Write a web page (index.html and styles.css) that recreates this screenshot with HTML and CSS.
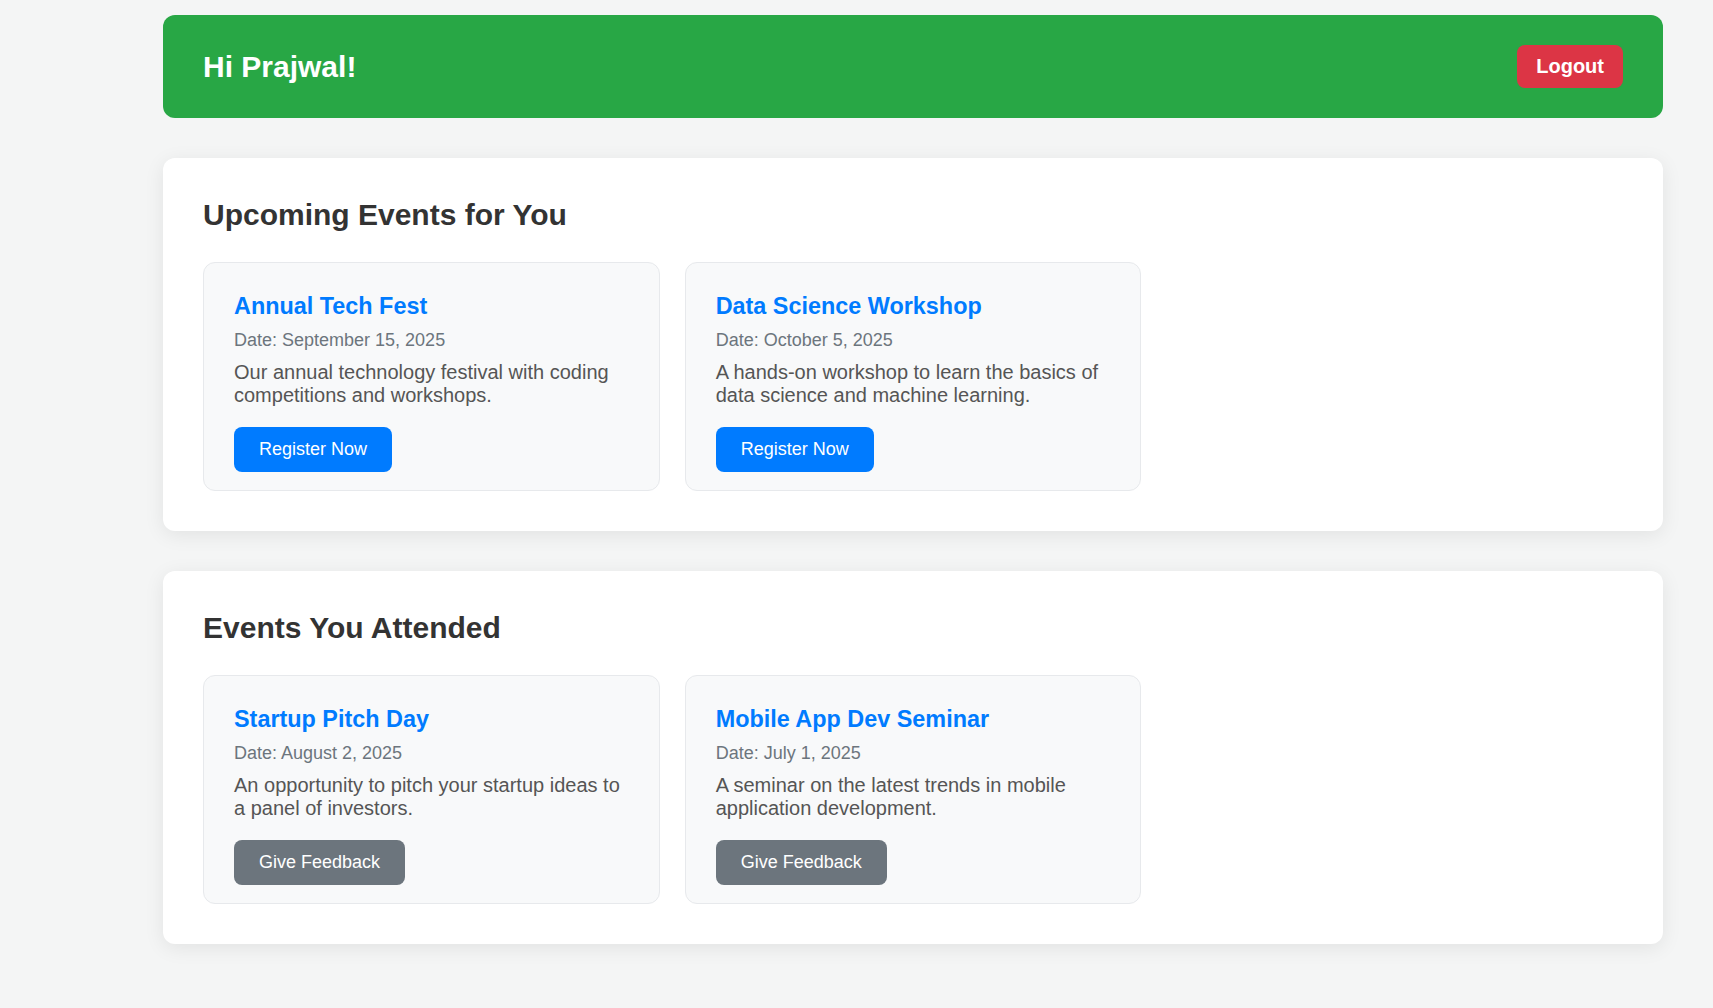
FILE: index.html
```html
<!DOCTYPE html>
<html lang="en">
<head>
<meta charset="utf-8">
<title>Dashboard</title>
<link rel="stylesheet" href="styles.css">
</head>
<body>
<div class="page">
  <header class="topbar">
    <h1 class="greeting">Hi Prajwal!</h1>
    <button class="btn btn-logout">Logout</button>
  </header>

  <section class="panel">
    <h2 class="panel-title">Upcoming Events for You</h2>
    <div class="event-grid">
      <div class="event-card">
        <h3 class="event-name">Annual Tech Fest</h3>
        <p class="event-date">Date: September 15, 2025</p>
        <p class="event-desc">Our annual technology festival with coding competitions and workshops.</p>
        <button class="btn btn-primary">Register Now</button>
      </div>
      <div class="event-card">
        <h3 class="event-name">Data Science Workshop</h3>
        <p class="event-date">Date: October 5, 2025</p>
        <p class="event-desc">A hands-on workshop to learn the basics of data science and machine learning.</p>
        <button class="btn btn-primary">Register Now</button>
      </div>
    </div>
  </section>

  <section class="panel">
    <h2 class="panel-title">Events You Attended</h2>
    <div class="event-grid">
      <div class="event-card">
        <h3 class="event-name">Startup Pitch Day</h3>
        <p class="event-date">Date: August 2, 2025</p>
        <p class="event-desc">An opportunity to pitch your startup ideas to a panel of investors.</p>
        <button class="btn btn-secondary">Give Feedback</button>
      </div>
      <div class="event-card">
        <h3 class="event-name">Mobile App Dev Seminar</h3>
        <p class="event-date">Date: July 1, 2025</p>
        <p class="event-desc">A seminar on the latest trends in mobile application development.</p>
        <button class="btn btn-secondary">Give Feedback</button>
      </div>
    </div>
  </section>
</div>
</body>
</html>
```

FILE: styles.css
```css
* {
  box-sizing: border-box;
}

html, body {
  margin: 0;
  padding: 0;
}

body {
  background: #f4f5f5;
  font-family: "Liberation Sans", Arial, sans-serif;
  color: #333;
  min-height: 1008px;
}

.page {
  width: 1500px;
  margin: 15px 0 0 163px;
  padding-bottom: 40px;
  display: flex;
  flex-direction: column;
  gap: 40px;
}

.topbar {
  background: #28a745;
  border-radius: 12px;
  padding: 30px 40px;
  display: flex;
  align-items: center;
  justify-content: space-between;
}

.greeting {
  margin: 0;
  color: #fff;
  font-size: 30px;
  font-weight: 700;
}

.btn {
  border: none;
  font-family: "Liberation Sans", Arial, sans-serif;
  color: #fff;
  cursor: pointer;
  line-height: normal;
}

.btn-logout {
  background: #dc3545;
  font-size: 20px;
  font-weight: 700;
  padding: 10px 19px;
  border-radius: 8px;
}

.panel {
  background: #fff;
  border-radius: 12px;
  padding: 40px;
  box-shadow: 0 4px 20px rgba(0, 0, 0, 0.08);
}

.panel-title {
  margin: 0 0 30px;
  font-size: 30px;
  font-weight: 700;
  color: #333;
}

.event-grid {
  display: grid;
  grid-template-columns: repeat(3, 1fr);
  gap: 25px;
}

.event-card {
  background: #f8f9fa;
  border: 1px solid #e7e9ec;
  border-radius: 12px;
  padding: 30px 30px 18px 30px;
}

.event-name {
  margin: 0 0 10px;
  font-size: 23.4px;
  font-weight: 700;
  color: #007bff;
}

.event-date {
  margin: 0 0 10px;
  font-size: 18px;
  color: #6c757d;
}

.event-desc {
  margin: 0 0 20px;
  font-size: 20px;
  color: #555;
}

.btn-primary,
.btn-secondary {
  font-size: 18px;
  padding: 12px 25px;
  border-radius: 8px;
}

.btn-primary {
  background: #007bff;
}

.btn-secondary {
  background: #6c757d;
}
```
